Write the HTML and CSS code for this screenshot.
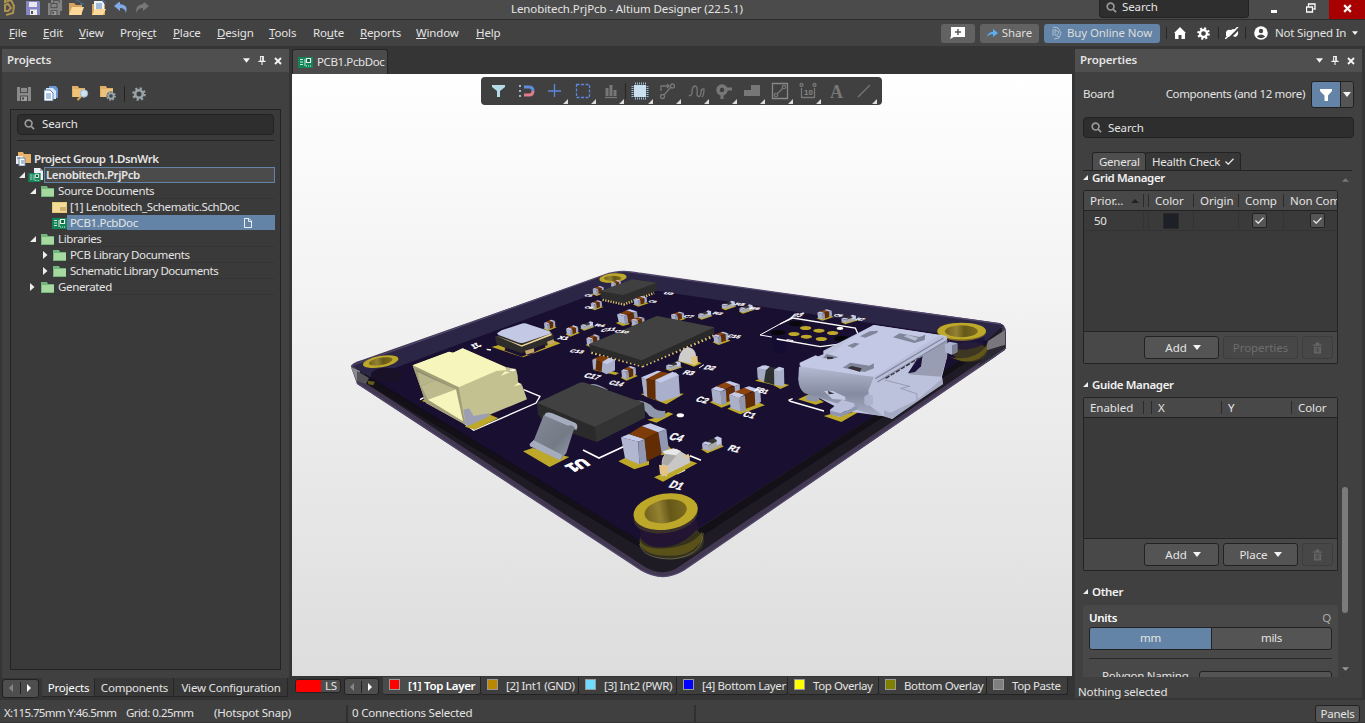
FILE: index.html
```
<!DOCTYPE html>
<html lang="en">
<head>
<meta charset="utf-8">
<title>Lenobitech.PrjPcb - Altium Designer (22.5.1)</title>
<link rel="stylesheet" href="styles.css">
</head>
<body>
<svg class="defs" width="0" height="0">
<defs>
<symbol id="mag" viewBox="0 0 12 12"><circle cx="5" cy="5" r="3.7" fill="none" stroke="#999" stroke-width="1.8"/><path d="M7.7 7.7 11 11" stroke="#999" stroke-width="2"/></symbol>
<symbol id="pin" viewBox="0 0 8 10"><path d="M2 .5h4M2.500 0v5.500M5.500 0v5.500M0 6h8M4 6v4M4.800 0v6" stroke="#f4f4f4" stroke-width="1.200" fill="none"/></symbol>
<symbol id="close" viewBox="0 0 8 8"><path d="M1 1l6 6M7 1 1 7" stroke="#f4f4f4" stroke-width="1.900"/></symbol>
<symbol id="down" viewBox="0 0 8 5"><path d="M0 0h8L4 5z" fill="#f4f4f4"/></symbol>
<symbol id="open" viewBox="0 0 6 6"><path d="M6 0v6H0z" fill="#eee"/></symbol>
<symbol id="shut" viewBox="0 0 5 8"><path d="M0 0l4.500 4L0 8z" fill="#eee"/></symbol>
<symbol id="floppy" viewBox="0 0 14 14"><path d="M0 0h13l1 1v13H0z" fill="currentColor"/><path d="M3 1h8v5H3z" fill="#e9e9ef"/><path d="M4 8.500h7V14H4z" fill="#eee"/><path d="M5 10h2v3H5z" fill="#555"/></symbol>
<symbol id="floppyg" viewBox="0 0 14 14"><path d="M0 0h14v14H0z" fill="#8a8a8a"/><path d="M3 0h8v6H3z" fill="#484848"/><path d="M4 1h6v4H4z" fill="#8a8a8a"/><path d="M3 8.500h8V14H3z" fill="#484848"/><path d="M4 9.500h6V14H4z" fill="#a0a0a0"/><path d="M5 10.500h2v2H5z" fill="#444"/></symbol>
<symbol id="gfold" viewBox="0 0 13 11"><path d="M0 0h6l1 2h6v9H0z" fill="#72b57e"/><path d="M1 3h12v7H1z" fill="#a5d9a0"/></symbol>
<symbol id="pcb" viewBox="0 0 15 11"><path d="M0 0h15v11H0z" fill="#128457"/><path d="M2 2.500h3M2 5h3M2 7.500h3M7 2v7" stroke="#cfe9da" stroke-width="1"/><path d="M8.500 1.500h4v4h-4zM8 9h1m1 0h1m1 0h1" stroke="#e3f3ea" fill="#0b5b3b" stroke-width="1.200"/></symbol>
<symbol id="gear" viewBox="0 0 14 14"><circle cx="7" cy="7" r="5.600" fill="none" stroke="currentColor" stroke-width="2.400" stroke-dasharray="2.200 2.198"/><circle cx="7" cy="7" r="3.800" fill="none" stroke="currentColor" stroke-width="2.600"/></symbol>
<symbol id="trash" viewBox="0 0 10 12"><path d="M0 2h10v1.500H0zM3 0h4v2H3zM1 4.500h8V12H1z" fill="#666"/><path d="M3.500 5.500v5M5 5.500v5M6.500 5.500v5" stroke="#444" stroke-width=".8"/></symbol>
<symbol id="check" viewBox="0 0 9 7"><path d="M.5 3.500 3.200 6.200 8.500.7" fill="none" stroke="#e6e6e6" stroke-width="1.300"/></symbol>
<symbol id="funnel" viewBox="0 0 12 12"><path d="M0 0h12v2L8 6.500V12H4.500V6.500L0 2z" fill="currentColor"/></symbol>
</defs>
</svg>
<div class="app">
<header class="title">
  <div class="quick">
    <svg width="160" height="19" viewBox="0 0 160 19"><path d="M5 0v2l6-2 3 6-1 7-7 2M5 5v6h3l3-3-3-4z" fill="none" stroke="#ad914f" stroke-width="2"/><use href="#floppy" x="26" y="1" width="14" height="14" color="#8587c4"/><g opacity=".9"><use href="#floppyg" x="51" y="0" width="11" height="11"/><use href="#floppyg" x="48" y="3" width="12" height="12"/></g><path d="M69 3h5l2 2h6v10H69z" fill="#d6a45f"/><path d="m72 7h12l-3 8H69z" fill="#ffd99a"/><path d="M76 1q5-1 6 4m-2-2 2 2 2-2" stroke="#48709b" fill="none"/><path d="M92 4h13v11H92z" fill="#d6a45f"/><path d="M94 1h8l2 2v8H94z" fill="#eef3fa"/><path d="M96 4h6m-6 2h6m-6 2h6" stroke="#5683b5"/><path d="M95 9h11l-3 6H92z" fill="#ffd99a"/><path d="M101 0q4 0 5 4" stroke="#48709b" fill="none"/><path d="M119 2l-5 4 6 5V8q5 0 6 5 3-8-6-9V2z" fill="#80a9e8"/><path d="M144 2l5 4-6 5V8q-5 0-7 5-1-8 7-9z" fill="#777"/></svg>
  </div>
  <h1>Lenobitech.PrjPcb - Altium Designer (22.5.1)</h1>
  <div class="tsearch"><svg width="11" height="11"><use href="#mag"/></svg><span>Search</span></div>
  <svg class="min" width="6" height="3"><path d="M0 0h6v3H0z" fill="#fff"/></svg>
  <svg class="max" width="10" height="10" viewBox="0 0 10 10"><path d="M2.500 3V1H9v5H7.500M.5 4h6v5h-6z" fill="none" stroke="#fff" stroke-width="1.300"/></svg>
  <div class="quit"><svg width="9" height="9" viewBox="0 0 8 8"><use href="#close"/></svg></div>
</header>
<nav class="menu">
  <span style="width:34px"><u>F</u>ile</span><span style="width:36px"><u>E</u>dit</span><span style="width:41px"><u>V</u>iew</span><span style="width:53px">Proje<u>c</u>t</span><span style="width:44px"><u>P</u>lace</span><span style="width:52px"><u>D</u>esign</span><span style="width:44px"><u>T</u>ools</span><span style="width:47px">Ro<u>u</u>te</span><span style="width:56px"><u>R</u>eports</span><span style="width:60px"><u>W</u>indow</span><span><u>H</u>elp</span>
  <div class="acts">
    <button class="b note"><svg width="16" height="12" viewBox="0 0 16 12"><path d="M1 0h14v10H4l-4 2 1-3z" fill="#fff"/><path d="M8 2v6M5 5h6" stroke="#555" stroke-width="1.400"/></svg></button>
    <button class="b share"><svg width="11" height="8" viewBox="0 0 11 8"><path d="M0 8q1-5 6-5V0l5 4-5 4V5Q2 5 0 8z" fill="#5cb0f5"/></svg>Share</button>
    <button class="b buy"><svg width="10" height="14" viewBox="0 0 10 14"><path d="M1 1l5 1 3 5-2 5-5 1M1 3v7m2-7v6l4 2M3 4l4 2-2 3" stroke="#a9bdcf" fill="none"/></svg>Buy Online Now</button>
    <i></i><svg width="12" height="12" viewBox="0 0 12 12"><path d="M6 0l6 6h-1v6H7.500V8h-3v4H1V6H0z" fill="#fff"/></svg>
    <svg class="g1" color="#fff" width="13" height="13"><use href="#gear"/></svg><i></i>
    <svg class="pl" width="14" height="12" viewBox="0 0 14 12"><path d="M1 5q1-3 5-2l2-1 3 1-7 7-3-1zM8 9l5-5q1 5-3 6z" fill="#fff"/><path d="M0 12 13 0" stroke="#fff" stroke-width="1.500"/></svg><i></i>
    <svg width="14" height="14" viewBox="0 0 14 14"><circle cx="7" cy="7" r="6.800" fill="#fff"/><circle cx="7" cy="5" r="2.200" fill="#444"/><path d="M2.800 10.500Q7 6.500 11.200 10.500 7 14 2.800 10.500z" fill="#444"/></svg>
    <span class="user">Not Signed In</span><svg width="6" height="4"><use href="#down"/></svg>
  </div>
</nav>
<main>
<section class="left">
  <div class="panel">
    <div class="phead"><b>Projects</b><svg width="7" height="5"><use href="#down"/></svg><svg width="8" height="9"><use href="#pin"/></svg><svg width="8" height="8"><use href="#close"/></svg></div>
    <div class="tools">
      <svg width="14" height="14"><use href="#floppyg"/></svg>
      <svg width="14" height="15" viewBox="0 0 14 15"><path d="M5 0h7l2 3v9H5z" fill="#6a98d6"/><path d="M2 2h7l3 3v8H2z" fill="#dae7f7"/><path d="M0 4h6l3 3v8H0z" fill="#fff" stroke="#5682bd"/><path d="M2 8h5M2 10h5M2 12h5" stroke="#5d8ac0"/></svg>
      <svg width="17" height="15" viewBox="0 0 17 15"><path d="M0 0h6l1 2h6v9H0z" fill="#e2ae65"/><path d="M1 3h12v8H1z" fill="#edc27a"/><circle cx="12" cy="7.500" r="3.700" fill="#cee2f0" stroke="#9bb8cd"/><path d="M9 10.500 5.500 14" stroke="#dba55c" stroke-width="2"/></svg>
      <svg color="#98a3aa" width="17" height="16" viewBox="0 0 17 16"><path d="M0 0h6l1 2h6v9H0z" fill="#e2ae65"/><path d="M1 3h12v8H1z" fill="#edc27a"/><circle cx="11" cy="10" r="4.500" fill="#444"/><use href="#gear" x="6" y="5" width="10" height="10"/></svg>
      <i></i><svg color="#98a3aa" width="14" height="14"><use href="#gear"/></svg>
    </div>
    <div class="box">
      <div class="search"><svg width="11" height="11"><use href="#mag"/></svg><span>Search</span></div>
      <hr>
      <div class="tree">
        <div class="row grp"><svg width="16" height="14" viewBox="0 0 16 14"><path d="M2 0h5l1 2h7v9H2z" fill="#e7b36b"/><path d="M0 4h7v8H0z" fill="#eee"/><path d="M3 6h6v8H3z" fill="#fff" stroke="#6889b0"/><path d="M1 6h3M5 9h3m-3 2h3" stroke="#5a7eaa"/></svg><b>Project Group 1.DsnWrk</b></div>
        <div class="row prj"><svg width="6" height="6"><use href="#open"/></svg><svg class="ic" width="16" height="14" viewBox="0 0 16 14"><path d="M6 0h6l3 3v9H6z" fill="#eef0f8"/><path d="M12 0v3h3" fill="#aab"/><use href="#pcb" y="5" width="13" height="9"/></svg><b>Lenobitech.PrjPcb</b></div>
        <div class="row l1"><svg width="6" height="6"><use href="#open"/></svg><svg class="ic" width="13" height="11"><use href="#gfold"/></svg><span>Source Documents</span></div>
        <div class="row leaf"><svg class="ic" width="15" height="11" viewBox="0 0 15 11"><path d="M0 0h15v11H0z" fill="#e9c778"/><path d="M1 1h13v9H1z" fill="#f5db98"/><path d="M8 6h6M8 8h6" stroke="#a88348"/></svg><span>[1] Lenobitech_Schematic.SchDoc</span></div>
        <div class="row leaf sel"><svg class="ic" width="15" height="11"><use href="#pcb"/></svg><span>PCB1.PcbDoc</span><svg class="pg" width="8" height="10" viewBox="0 0 8 10"><path d="M.5.5h4.500L7.500 3v6.500h-7zM4.500.5V3.500H7.500" stroke="#e8eef4" fill="none"/></svg></div>
        <div class="row l1"><svg width="6" height="6"><use href="#open"/></svg><svg class="ic" width="13" height="11"><use href="#gfold"/></svg><span>Libraries</span></div>
        <div class="row l2"><svg width="5" height="8"><use href="#shut"/></svg><svg class="ic" width="13" height="11"><use href="#gfold"/></svg><span>PCB Library Documents</span></div>
        <div class="row l2"><svg width="5" height="8"><use href="#shut"/></svg><svg class="ic" width="13" height="11"><use href="#gfold"/></svg><span class="sl">Schematic Library Documents</span></div>
        <div class="row l1"><svg width="5" height="8"><use href="#shut"/></svg><svg class="ic s" width="13" height="11"><use href="#gfold"/></svg><span>Generated</span></div>
      </div>
    </div>
  </div>
  <div class="ltabs"><div class="arrows"><svg width="35" height="17" viewBox="0 0 35 17"><path d="M10 4v8L6 8z" fill="#858585"/><path d="M17.500 2v12" stroke="#222"/><path d="M24 4v8l4-4z" fill="#fff"/></svg></div><span class="on" style="width:53px">Projects</span><span style="width:79px">Components</span><span style="width:114px">View Configuration</span></div>
</section>
<section class="mid">
  <div class="doctabs"><div class="doc"><svg width="15" height="11"><use href="#pcb"/></svg><span>PCB1.PcbDoc</span></div></div>
  <div class="canvas">
  <svg class="board" width="780" height="602" viewBox="292 74 780 602">
    <defs>
      <linearGradient id="hole"><stop offset="0" stop-color="#72641c"/><stop offset=".35" stop-color="#948133"/><stop offset=".6" stop-color="#655817"/><stop offset="1" stop-color="#7c6c20"/></linearGradient>
      <linearGradient id="usb" x2="0" y2="1"><stop offset="0" stop-color="#b4bad2"/><stop offset=".55" stop-color="#858ba0"/><stop offset="1" stop-color="#a8aec6"/></linearGradient>
      <linearGradient id="leg" x2="1" y2="1"><stop offset="0" stop-color="#858b98"/><stop offset=".6" stop-color="#747b87"/><stop offset="1" stop-color="#9ba1b2"/></linearGradient>
      <g id="cap"><path d="M-8 114 12 104 56 120 84 112 84 124 40 138zM118 96 140 66 164 90z" fill="#bda82a"/><path d="M0 42 52 55 55 123 12 105z" fill="#b1b7d0"/><path d="M52 55 72 48 78 115 55 123z" fill="#9298b1"/><path d="M0 42 24 32 72 47 52 55z" fill="#c5cae8"/><path d="M24 32 62 8 112 26 70 48z" fill="#7d3c08"/><path d="M70 48 112 26 122 92 78 114z" fill="#622d05"/><path d="M62 8 88 0 136 18 112 27z" fill="#c5cae8"/><path d="M112 27 136 18 143 75 122 92z" fill="#9298b1"/></g>
      <g id="chip"><path d="M-2 32 14 40 45 27 23 16z" fill="#bda82a"/><path d="M0 12 13 16 14 36 2 31z" fill="#aab0c9"/><path d="M13 16 20 13 21 34 14 36z" fill="#9298b1"/><path d="M0 12 7 8 20 12 13 16z" fill="#c5cae8"/><path d="M7 8 19 2 31 6 20 12z" fill="#8e440d"/><path d="M20 12 32 7 33 27 21 32z" fill="#622d05"/><path d="M19 2 25 0 39 5 32 8z" fill="#c5cae8"/><path d="M32 8 39 5 40 22 33 27z" fill="#a3a9c2"/></g>
      <g id="res"><path d="M-2 31 12 40 49 25 37 18z" fill="#bda82a"/><path d="M0 18 15 22 16 35 1 30z" fill="#aab0c9"/><path d="M0 18 27 6 43 9 15 22z" fill="#333"/><path d="M15 22 43 9 45 23 16 35z" fill="#aaa"/><path d="M27 6 34 2 44 6 43 18 33 22 33 11z" fill="#c5cae8"/><path d="M0 18 7 14 22 17 15 22z" fill="#c5cae8"/></g>
    </defs>
    <path d="M351 367Q351 363 362 360L604 275Q620 269 638 273L999 323Q1006 325 1006 332V348L995 357 684 570Q663 583 641 570L357 384z" fill="#423852"/>
    <path d="M357 364 608 276Q620 272 636 276L1002 328V347L680 566Q664 578 645 567L358 378z" fill="#1e1b24"/>
    <path d="M352 365 606 275Q621 270 640 274L1004 325 985 342 665 550 642 544 366 376z" fill="#2b2546"/>
    <path d="M368 378 610 288 625 286 990 341 981 347 678 541Q663 552 644 544z" fill="#190f31"/>
    <path d="M365 374 642 542Q662 552 680 541L984 345 988 348 681 550Q664 561 644 550L360 380z" fill="#100e14" opacity=".8"/>
    <path d="M988 341 1005 330V345L985 351z" fill="#79777b"/><path d="M985 351 1005 345V350L978 368z" fill="#2a2830"/><path d="M351 367 360 371 357 382z" fill="#8a898e"/><path d="M357 371 369 378 366 384 357 381z" fill="#555258"/>
    <path d="M357 383 641 570Q663 583 684 570L1006 348M351 366 604 275Q620 269 638 273L1001 324" stroke="#51466a" stroke-width="1.300" fill="none"/>
    <g transform="translate(345 260) scale(.33333)">
      <ellipse cx="125" cy="345" rx="47" ry="22" fill="#191127"/><ellipse cx="107" cy="305" rx="54" ry="17" transform="rotate(-10 107 305)" fill="#bda82a"/><ellipse cx="107" cy="304" rx="36" ry="11" transform="rotate(-10 107 304)" fill="url(#hole)"/><path d="M68 362 90 365 85 376 70 373z" fill="#65591d"/>
      <path d="M225 419 236 413M536 389 585 409 573 429 386 511 360 492M425 268 438 270" fill="none" stroke="#fff" stroke-width="4"/>
      <path d="M231 424 255 430 238 417zM360 500 390 509 460 475 415 455z" fill="#bda82a"/>
      <path d="M203 316 312 275 324 278 353 265 481 321 513 327 518 347 519 366 532 377 546 418 361 494 243 429z" fill="#c4c190"/>
      <path d="M203 316 312 275 324 278 353 265 481 321 484 330 454 333 341 382z" fill="#f6f5bb"/>
      <path d="M203 316 341 382 361 493 243 429z" fill="#a19e79"/>
      <path d="M213 328 330 386 334 390 272 363 228 378z" fill="#8f8c6b"/><path d="M217 335 271 361 226 378z" fill="#b8b58a"/><path d="M228 378 271 361 333 388 250 420z" fill="#bdba8d"/><path d="M249 419 333 388 354 484z" fill="#f6f5bb"/><path d="M467 348 495 337 480 334zM506 379 532 373 520 368z" fill="#f6f5bb"/>
      <path d="M355 449 372 445 386 468 434 459 429 471 369 498 361 493z" fill="#9c9fb4"/>
      <path d="M440 261 461 255 553 286 627 242 647 250 623 259 534 292z" fill="#bda82a"/><path d="M450 230 540 190 626 223 626 248 529 285 455 253z" fill="#2e2d2b"/><path d="M480 267 530 285 600 258" stroke="#1a1030" stroke-width="10" fill="none"/><path d="M453 227 530 256 620 220 620 226 530 260z" fill="#ecd594"/><path d="M456 220 470 211 527 192Q538 187 550 193L614 214Q622 219 612 223L543 246Q530 252 518 247L461 225z" fill="#c3c8e5"/><path d="M540 272 567 265 568 277 543 284zM606 245 626 238 628 249 609 256z" fill="#c6a66c"/>
      <use href="#chip" transform="translate(597 179) scale(.85)"/><use href="#chip" transform="translate(664 196) scale(.85)"/>
    </g>
    <g transform="translate(560 260) scale(.33333)">
      <ellipse cx="159" cy="54" rx="41" ry="14" transform="rotate(-6 159 54)" fill="#bda82a"/><ellipse cx="158" cy="55" rx="26" ry="8" fill="url(#hole)"/>
      <use href="#chip" transform="translate(98 78) scale(.85 .75)"/><use href="#chip" transform="translate(153 60) scale(.75)"/>
      <path d="M128 118 192 132 282 98" stroke="#d3bf61" stroke-width="10" stroke-dasharray="4 4" fill="none"/><path d="M121 92 229 58 290 68 290 92 190 130 122 115z" fill="#2d2d2d"/><path d="M121 94 216 58 290 68 190 105z" fill="#404040"/>
      <use href="#chip" transform="translate(92 121) scale(.85 .75)"/><use href="#chip" transform="translate(221 108) scale(1 .8)"/><use href="#cap" transform="translate(171 148) scale(.44 .36)"/><use href="#chip" transform="translate(214 170) scale(1 .8)"/><use href="#chip" transform="translate(333 155) scale(1 .8)"/>
      <use href="#res" transform="translate(414 149) scale(.9 .75)"/><use href="#res" transform="translate(485 121) scale(.9 .75)"/><use href="#res" transform="translate(538 131) scale(.9 .75)"/><use href="#res" transform="translate(62 182) scale(.85 .75)"/><use href="#chip" transform="translate(19 197) scale(.9 .8)"/><use href="#chip" transform="translate(79 223)"/>
      <path d="M95 274 247 314 460 224" fill="none" stroke="#d3bf61" stroke-width="16" stroke-dasharray="5 7"/>
      <path d="M87 253 291 168 463 202 463 222 247 318 91 274z" fill="#2a2a2a"/><path d="M87 253 291 168 463 202 245 301z" fill="#414141"/>
      <g transform="translate(97 285)"><path d="M0 44 70 60 80 54 20 38z" fill="#bda82a"/><path d="M2 14 36 24 34 52 6 44z" fill="#622d05"/><path d="M0 13 26 2 56 10 36 24z" fill="#7d3c08"/><path d="M0 14 12 10 10 44 2 41z" fill="#a8aec6"/><path d="M30 24 68 14 68 46 42 58 28 50z" fill="#aab0cc"/><path d="M28 22 50 8 68 14 44 28z" fill="#c5cae8"/></g><use href="#chip" transform="translate(184 318) scale(1.100)"/><use href="#chip" transform="translate(460 215) scale(1.150 1)"/><use href="#res" transform="translate(318 302) scale(1 .8)"/>
      <path d="M352 302 402 320 425 310 408 303z" fill="#bda82a"/><path d="M355 303Q359 264 387 262 407 267 408 288L407 315z" fill="#cfcdca"/><path d="M392 292 412 287 414 309 398 317z" fill="#dfc57c"/><path d="M417 324 432 314" stroke="#fff" stroke-width="3"/>
      <g transform="translate(244 332)"><path d="M-2 70 36 63 128 69 75 101z" fill="#bda82a"/><path d="M2 25 49 41 41 88 8 75z" fill="#a0a5ba"/><path d="M12 24 52 2 98 10 57 34z" fill="#7d3c08"/><path d="M15 24 55 35 48 90 17 80z" fill="#622d05"/><path d="M0 20 14 25 18 80 8 72z" fill="#a8aec6"/><path d="M0 20 48 0 60 2 14 26z" fill="#c5cae8"/><path d="M42 28 103 5 112 14 116 76 60 93 43 86z" fill="#aab0cc"/><path d="M42 28 94 3 112 12 57 36z" fill="#c5cae8"/></g>
      <use href="#chip" transform="translate(454 363) scale(2.180 2)"/><use href="#chip" transform="translate(507 379) scale(2.400 2.100)"/>
      <g transform="translate(591 315)"><path d="M-6 47 12 40 97 60 70 72 48 60z" fill="#bda82a"/><path d="M0 9 27 1 53 14 53 52 20 51 2 40z" fill="#a4aac2"/><path d="M28 6 61 8 53 60 21 51z" fill="#2e2f2f"/><path d="M51 15 81 10 82 64 52 60z" fill="#a8aec8"/><path d="M0 9 18 1 38 4 29 14zM51 14 66 5 82 10 67 19z" fill="#c5cae8"/></g>
      <path d="M700 170 600 225 700 242" fill="none" stroke="#fff" stroke-width="3"/><ellipse cx="654" cy="218" rx="22" ry="8" fill="#07070a"/><path d="M635 225 680 232V275Q660 290 640 273z" fill="#150c32"/>
      <ellipse cx="361" cy="466" rx="11" ry="6" fill="#fff"/>
    </g>
    <g transform="translate(780 280) scale(.33333)">
      <path d="M0 132 39 114 226 144 239 174M-10 177 121 200 195 190M25 361 38 356M28 363 132 393" fill="none" stroke="#fff" stroke-width="4"/>
      <ellipse cx="48" cy="131" rx="21" ry="8" fill="#09080b"/><ellipse cx="185" cy="176" rx="23" ry="9" fill="#07070a"/>
      <g fill="#bda82a"><ellipse cx="77" cy="144" rx="17" ry="6"/><ellipse cx="117" cy="152" rx="17" ry="6"/><ellipse cx="158" cy="159" rx="17" ry="6"/><ellipse cx="42" cy="162" rx="17" ry="6"/><ellipse cx="79" cy="170" rx="17" ry="6"/><ellipse cx="124" cy="177" rx="17" ry="6"/></g><ellipse cx="180" cy="145" rx="10" ry="5" fill="#fff"/>
      <use href="#chip" transform="translate(112 88) scale(1.100 .85)"/><use href="#res" transform="translate(184 103) scale(1 .75)"/>
      <ellipse cx="569" cy="215" rx="52" ry="30" fill="#3d3722"/><path d="M510 232Q585 245 621 195V212Q600 248 545 244z" fill="#625719"/><path d="M474 160Q520 191 615 170L608 195Q530 228 490 185z" fill="#1e1540" opacity=".8"/>
      <ellipse cx="545" cy="156" rx="73" ry="27" fill="#7e6b20"/><ellipse cx="545" cy="153" rx="73" ry="25" fill="#bda82a"/><ellipse cx="544" cy="154" rx="49" ry="18" fill="url(#hole)"/>
      <path d="M54 358 90 341 132 366 107 374zM131 408 165 398 200 402 235 390 236 396 184 426z" fill="#bda82a"/><path d="M78 348 100 342 119 353 112 365 80 361z" fill="#8e94aa"/>
      <path d="M397 223 500 181 501 231 486 290 489 312 397 370 337 417 311 409 190 392 68 328 56 300 59 262 77 244 130 223 130 212 281 135 500 168z" fill="#bcc1dc"/>
      <path d="M412 226 502 181 502 227 483 290 386 283z" fill="#989db4"/><path d="M384 280 412 237 428 225 423 259 405 276z" fill="#1c113b"/>
      <path d="M59 248 107 226 130 238 213 173 226 167 281 135 499 168 501 183 299 307 280 297 59 257z" fill="#c3c8e4"/>
      <path d="M57 260 85 263 260 288 282 290 265 331 270 377 311 409 272 402 74 340Q56 327 55 298z" fill="url(#usb)"/>
      <path d="M129 234 140 222 175 231 160 237zM202 197 224 188 239 191 219 204zM240 169 269 154 293 152 292 158 256 173zM339 172 359 160 419 171 436 164 434 180 403 189zM188 263 211 248 268 257 281 250 282 265 253 276z" fill="#80869a"/>
      <path d="M140 230 160 231 157 237 142 238zM203 264 215 258 245 265 240 276z" fill="#343139"/><path d="M371 169 383 164 415 174 405 182z" fill="#b8bdd7"/>
      <path d="M280 292 475 167 500 169 500 182 322 293 294 309z" fill="#bac0db"/><path d="M292 306 502 181M286 296 490 174" stroke="#83889d" stroke-width="4"/>
      <path d="M317 295 416 235" stroke="#322f3d" stroke-width="4" stroke-dasharray="13 5"/><path d="M313 300 389 319 362 325 410 341 412 364" fill="none" stroke="#858ba1" stroke-width="2"/>
      <path d="M313 407 312 391 331 398 411 360 487 296 488 313 337 416z" fill="#a5abc3"/>
      <path d="M253 350 264 342 279 347 279 374 262 378 253 371zM494 194 508 185 532 190 532 216 515 224 496 217z" fill="#adb3ce"/><path d="M516 196 532 190 532 216 516 223z" fill="#7b8195"/>
      <path d="M132 333 157 332 195 350 197 360 157 357z" fill="#c2c7e2"/><path d="M144 332 163 341 146 343z" fill="#38353a"/><path d="M150 389 186 359 222 370 224 379 180 402 179 411 152 403z" fill="#b9bfda"/><path d="M151 392 183 400 231 378 232 388 184 411 152 404z" fill="#9096ad"/>
    </g>
    <g transform="translate(510 370) scale(.33333)">
      <path d="M412 149 443 142 475 126 490 132 439 158z" fill="#bda82a"/><path d="M372 91Q415 92 432 115 445 125 466 122L465 140Q440 150 418 138 405 118 380 105z" fill="#8f98a8"/><path d="M242 46Q260 42 292 62M302 67 345 84" fill="none" stroke="#8992a1" stroke-width="6"/>
      <path d="M81 98 209 38 256 47 402 99 405 143 260 216 107 163 84 133z" fill="#2a2a2a"/><path d="M81 98 209 38Q217 35 230 40L402 99 255 171z" fill="#414141"/><path d="M255 171 402 99 405 143 260 216z" fill="#333"/>
      <path d="M39 244 68 234 178 261 119 291z" fill="#bda82a"/><path d="M73 207 101 136Q108 128 120 128L190 158Q204 162 202 174L191 180 169 249 150 271 59 226z" fill="url(#leg)"/><path d="M105 131Q113 124 127 130L195 158Q207 165 198 182 190 162 174 167L105 137zM59 221 71 211 157 255 150 271 60 229z" fill="#a4acbd"/>
      <path d="M219 240 267 264 340 230M540 257 573 271M500 311 525 300" fill="none" stroke="#fff" stroke-width="5"/>
      <use href="#cap" transform="translate(333 160)"/>
      <path d="M432 322 452 313 541 272 562 280 459 335z" fill="#bda82a"/><path d="M455 289Q453 259 473 243L499 236 539 260 540 278 455 320z" fill="#c8c7c6"/><path d="M458 244 490 235 513 243 498 255 464 252z" fill="#e8e8e8"/><path d="M464 251 499 257 473 287 456 282z" fill="#aaa9a8"/><path d="M447 284 476 289 471 320 450 311zM525 257 535 251 540 262 530 265z" fill="#e4c486"/>
      <use href="#res" transform="translate(576 196) scale(1.340)"/>
      <ellipse cx="485" cy="514" rx="97" ry="54" fill="#34321f"/><path d="M390 510Q400 540 470 535 550 527 576 485L578 506Q546 559 480 557 406 559 390 522z" fill="#5a5119"/><path d="M390 472 392 505Q410 532 450 532 517 533 566 471L557 445z" fill="#221432"/>
      <ellipse cx="467" cy="437" rx="97" ry="52" transform="rotate(-9 467 437)" fill="#3a302c"/><ellipse cx="467" cy="425" rx="97" ry="54" transform="rotate(-8 467 425)" fill="#bda82a"/><ellipse cx="467" cy="424" rx="64" ry="35" transform="rotate(-10 467 424)" fill="url(#hole)"/>
      <path d="M389 522Q400 567 485 567 575 559 580 489" fill="none" stroke="#79785d" stroke-width="2"/>
    </g>
    <g class="silk">
      <text transform="matrix(.8 .2 -.6 .8 668 439)">C4</text><text transform="matrix(.8 .2 -.6 .8 668 487)">D1</text><text transform="matrix(.85 .2 -.6 .75 727 450)" font-size="10">R1</text>
      <text transform="matrix(.85 .2 -.6 .7 695 401)" font-size="10">C2</text><text transform="matrix(.85 .2 -.6 .7 742 416)" font-size="10">C1</text><text transform="matrix(.8 .2 -.6 .7 754 391)" font-size="8">FB1</text>
      <text transform="matrix(.8 .15 -.6 .6 583 377)" font-size="10">C17</text><text transform="matrix(.8 .15 -.6 .6 608 384)" font-size="9">C14</text><text transform="matrix(.9 .1 -.6 .6 682 374)" font-size="9">R3</text><text transform="matrix(.9 .1 -.6 .6 703 369)" font-size="9">D2</text>
      <text transform="matrix(.9 -.1 -.4 .5 600 332)" font-size="9">C11</text><text transform="matrix(.9 .1 -.5 .5 569 352)" font-size="8">C13</text><text transform="matrix(.9 .1 -.5 .4 614 332)" font-size="8">C10</text><text transform="matrix(.8 .1 -.5 .5 727 337)" font-size="8">C15</text>
      <text transform="matrix(.9 .1 -.5 .4 683 317)" font-size="8">C7</text><text transform="matrix(.9 .1 -.5 .4 712 314)" font-size="8">R2</text><text transform="matrix(.9 .1 -.5 .4 734 305)" font-size="8">R5</text><text transform="matrix(.9 .1 -.5 .4 749 309)" font-size="8">R6</text><text transform="matrix(1 .1 -.5 .4 663 294)" font-size="7">U3</text><text transform="matrix(.8 .1 -.5 .4 584 296)" font-size="7">C5</text><text transform="matrix(.8 .1 -.5 .4 584 308)" font-size="7">C6</text><text transform="matrix(.8 .1 -.5 .4 648 302)" font-size="7">C9</text>
      <text transform="matrix(.9 .1 -.5 .5 557 339)" font-size="9">X1</text><text transform="matrix(.9 .1 -.5 .4 594 326)" font-size="8">R4</text><text transform="matrix(-.8 .3 .7 .6 482 346)" font-size="9">J1</text><text transform="matrix(1 .1 -.5 .4 508 371)" font-size="10">●</text>
      <text transform="matrix(.9 -.1 -.6 .6 790 318)" font-size="10">P3</text><text transform="matrix(.8 .1 -.5 .4 833 316)" font-size="8">C6</text><text transform="matrix(.8 .1 -.5 .4 855 320)" font-size="8">R7</text>
      <text class="u1" transform="matrix(-.9 .4 -.7 -.6 583 458)" font-size="16">U1</text>
    </g>
  </svg>
  <div class="pill">
  <svg width="401" height="28" viewBox="481 77 401 28" fill="none" stroke="#777" stroke-width="1.300">
    <path d="M492 85h13v2l-5 4v6h-3v-6l-5-4z" fill="#b4dbe8" stroke="none"/><path d="M524 87h5q4 0 4 4" stroke="#5f8dd8" stroke-width="3"/><path d="M524 95h5q4 0 4-4" stroke="#e07d88" stroke-width="3"/><path d="M520 85v12" stroke="#96b9c9" stroke-width="2" stroke-dasharray="2 3"/>
    <path d="M548 91h13M554.500 84v13" stroke="#5d87df"/><path d="M576.500 84.500h13v13h-13z" stroke="#5d87df" stroke-dasharray="3 1.500"/><path d="M607 96V88m4 8v-11m4 11v-6" stroke="#777" stroke-width="3"/><path d="M605 97.500h12"/><path d="M625.500 83v16" stroke="#2b2b2b"/>
    <path d="M634 85h12v12h-12z" fill="#cbe0ee" stroke="none"/><path d="M635 83.500h11M635 98.500h11" stroke="#9dbfd7" stroke-width="2" stroke-dasharray="1 1"/><path d="M632.500 86v11M647.500 86v11" stroke="#9dbfd7" stroke-width="2" stroke-dasharray="1 1"/>
    <path d="M661 91v-5h8m-2-2 2 2-2 2M664 95l7-8"/><circle cx="662.500" cy="96.500" r="2"/><circle cx="672.500" cy="86" r="2"/><path d="M689 95q2 2 3-2 0-7 3-7t2 9q3 4 4-2 0-5 3-4 0 6-2 8"/>
    <circle cx="722" cy="90" r="4" stroke-width="3.500"/><path d="M727 89h5M722 94v5" stroke-width="3"/><path d="M744 90h7v-5h9v11h-16z" fill="#777" stroke="none"/><path d="M772.500 83.500h15v15h-15z" stroke="#888"/><path d="M777 94l6-6"/><circle cx="776" cy="95" r="1.700"/><circle cx="784" cy="87" r="1.700"/>
    <path d="M801.500 88v9.500h13V88"/><circle cx="801.500" cy="85" r="1.500"/><circle cx="814.500" cy="85" r="1.500"/><text x="804" y="95" font-size="8" font-weight="bold" fill="#888" stroke="none" font-family="Liberation Sans">10</text><text x="830" y="97.500" font-size="18" font-weight="bold" fill="#777" stroke="none" font-family="Liberation Serif">A</text><path d="M858 97l12-12"/>
    <path d="M568 99v5h-5zM596 99v5h-5zM624 99v5h-5zM653 99v5h-5zM681 99v5h-5zM709 99v5h-5zM737 99v5h-5zM765 99v5h-5zM793 99v5h-5zM821 99v5h-5zM877 99v5h-5z" fill="#ddd" stroke="none"/>
  </svg></div>
  </div>
  <div class="layers"><div class="ls"><i></i><span>LS</span></div><div class="arrows"><svg width="33" height="16" viewBox="0 0 33 16"><path d="M9 4v8L5 8z" fill="#858585"/><path d="M16.500 2v12" stroke="#222"/><path d="M23 4v8l4-4z" fill="#fff"/></svg></div>
  <div class="ly on" style="width:98px"><i style="background:#f00"></i>[1] Top Layer</div><div class="ly" style="width:98px"><i style="background:#b98700"></i>[2] Int1 (GND)</div><div class="ly" style="width:98px"><i style="background:#6fdcff"></i>[3] Int2 (PWR)</div><div class="ly" style="width:111px"><i style="background:#00f"></i>[4] Bottom Layer</div><div class="ly" style="width:91px"><i style="background:#ff0"></i>Top Overlay</div><div class="ly" style="width:108px"><i style="background:#808000"></i>Bottom Overlay</div><div class="ly" style="width:81px"><i style="background:#808080"></i>Top Paste</div></div>
</section>
<section class="right">
  <div class="phead"><b>Properties</b><svg width="7" height="5"><use href="#down"/></svg><svg width="8" height="9"><use href="#pin"/></svg><svg width="8" height="8"><use href="#close"/></svg></div>
  <div class="filter"><span>Board</span><span class="cmp">Components (and 12 more)</span><div class="fb"><div><svg color="#fff" width="12" height="12"><use href="#funnel"/></svg></div><em><svg width="8" height="5"><use href="#down"/></svg></em></div></div>
  <div class="search"><svg width="11" height="11"><use href="#mag"/></svg><span>Search</span></div>
  <div class="ptabs"><span class="on">General</span><span>Health Check <svg width="9" height="7"><use href="#check"/></svg></span></div>
  <div class="scroll">
   <div class="content">
    <h2 class="gm"><svg width="5" height="5"><use href="#open" width="5" height="5"/></svg>Grid Manager</h2>
    <div class="table">
      <div class="th"><span style="width:60px">Prior...<svg width="8" height="4" viewBox="0 0 8 4"><path d="M0 4 4 0 8 4z" fill="#222"/></svg></span><span style="width:5px"></span><span style="width:45px">Color</span><span style="width:45px">Origin</span><span style="width:45px">Comp</span><span class="nc">Non Com</span></div>
      <div class="td"><span style="width:60px">50</span><span style="width:5px"></span><span style="width:45px"><i class="sw"></i></span><span style="width:45px"></span><span class="c1" style="width:45px"><i class="cb"><svg width="9" height="7"><use href="#check"/></svg></i></span><span class="last"><i class="cb"><svg width="9" height="7"><use href="#check"/></svg></i></span></div>
    </div>
    <div class="foot"><button>Add<svg width="8" height="5"><use href="#down"/></svg></button><button class="dis">Properties</button><button class="dis tr"><svg width="9" height="12"><use href="#trash"/></svg></button></div>
    <h2 class="gd"><svg width="5" height="5"><use href="#open" width="5" height="5"/></svg>Guide Manager</h2>
    <div class="table"><div class="th"><span style="width:60px">Enabled</span><span style="width:8px"></span><span style="width:70px">X</span><span style="width:70px">Y</span><span class="nc">Color</span></div></div>
    <div class="foot"><button>Add<svg width="8" height="5"><use href="#down"/></svg></button><button>Place<svg width="8" height="5"><use href="#down"/></svg></button><button class="dis tr"><svg width="9" height="12"><use href="#trash"/></svg></button></div>
    <h2 class="ot"><svg width="5" height="5"><use href="#open" width="5" height="5"/></svg>Other</h2>
    <div class="units"><div class="uh"><b>Units</b><span>Q</span></div><div class="seg"><span class="on">mm</span><span>mils</span></div><hr><div class="poly"><span>Polygon Naming</span><div></div></div></div>
   </div>
   <div class="bar"><svg width="7" height="4" viewBox="0 0 8 4"><path d="M0 4 4 0 8 4z" fill="#777"/></svg><i></i><svg width="7" height="4" viewBox="0 0 8 4"><path d="M0 0h8L4 4z" fill="#999"/></svg></div>
  </div>
  <div class="nothing">Nothing selected</div>
</section>
</main>
<footer><span class="xy" style="width:122px">X:115.75mm Y:46.5mm</span><span class="gr" style="width:88px">Grid: 0.25mm</span><span style="width:132px">(Hotspot Snap)</span><i></i><span class="con">0 Connections Selected</span><i></i><button>Panels</button></footer>
</div>
</body>
</html>
```
FILE: styles.css
```
* { box-sizing: border-box; }
body { margin: 0; background: #353535; overflow: hidden; }
.defs { position: absolute; }
.app { width: 1365px; height: 723px; display: flex; flex-direction: column; background: #353535; color: #e4e4e4; font: 11.5px/16px "Noto Sans", "Open Sans", sans-serif; letter-spacing: -.3px; white-space: nowrap; }
svg { display: block; flex: none; }
button { font: inherit; color: inherit; letter-spacing: inherit; border: 0; padding: 0; display: flex; align-items: center; justify-content: center; }
hr { border: 0; margin: 0; }
b, h2 { font-weight: 600; }
.title { height: 20px; flex: none; background: #4b4b4b; border-bottom: 1px solid #2c2c2c; display: flex; }
.quick { width: 511px; flex: none; }
h1 { margin: 0; width: 588px; flex: none; font-size: 11.5px; font-weight: 400; letter-spacing: -.1px; line-height: 18px; }
.tsearch { width: 150px; flex: none; height: 18px; background: #2e2e2e; border: 1px solid #222; border-top: 0; border-radius: 0 0 4px 4px; display: flex; padding: 2px 0 0 6px; letter-spacing: -.1px; }
.tsearch span { margin: -3px 0 0 5px; }
.min { margin: 10px 0 0 22px; }
.max { margin: 3px 0 0 29px; }
.quit { margin-left: 13px; width: 36px; height: 19px; background: #a80000; display: flex; align-items: center; justify-content: center; padding-bottom: 3px; }
.menu { height: 26px; flex: none; background: #424242; display: flex; align-items: center; padding-left: 9px; letter-spacing: -.15px; }
.menu > span { flex: none; }
.menu u { text-underline-offset: 1px; }
.acts { margin-left: auto; display: flex; align-items: center; padding-right: 7px; height: 26px; }
.acts .b { height: 19px; border-radius: 3px; background: #626262; margin-right: 5px; color: #ddd; letter-spacing: -.1px; }
.acts .note { width: 34px; }
.acts .share { width: 59px; gap: 4px; }
.acts .buy { width: 116px; background: #6384a6; gap: 5px; margin-right: 6px; }
.acts i { width: 1px; height: 12px; background: #262626; margin-right: 7px; }
.acts .g1 { margin: 0 8px 0 11px; }
.acts .g1 + i { margin-right: 6px; }
.acts .pl { margin-right: 6px; }
.acts .pl + i { margin-right: 8px; }
.acts .user { margin: 0 4px 0 7px; width: 73px; letter-spacing: -.2px; }
main { height: 654px; flex: none; display: flex; }
.left { width: 292px; padding: 3px 3px 0 2px; flex: none; }
.panel { height: 629px; background: #404040; display: flex; flex-direction: column; }
.phead { height: 23px; flex: none; background: #4f4f4f; display: flex; align-items: center; padding: 0 7px 0 5px; gap: 8px; }
.phead b { margin: -1px auto 0 0; letter-spacing: -.1px; }
.tools { height: 37px; display: flex; align-items: center; padding: 6px 0 0 15px; gap: 13px; }
.tools svg:nth-child(3) { margin-left: 1px; }
.tools svg:nth-child(4) { margin-left: -2px; }
.tools i { width: 1px; height: 16px; background: #222; margin: 0 -6px 0 -6px; }
.box { margin: 0 8px 0; height: 561px; border: 1px solid #232323; background: #3a3a3a; padding: 4px 6px; }
.search { height: 21px; background: #2e2e2e; border: 1px solid #222; border-radius: 4px; display: flex; align-items: center; padding-left: 7px; letter-spacing: -.1px; }
.search span { margin-left: 6px; }
.box .search { width: 257px; padding-left: 6px; }
.box .search span { margin-top: -1px; margin-left: 7px; }
.box hr { height: 1px; background: #232323; margin: 5px 0 10px; width: 257px; }
.tree { width: 258px; }
.row { height: 16px; display: flex; align-items: center; letter-spacing: -.36px; }
.row b, .row span { flex: 1; height: 16px; line-height: 15px; border-bottom: 1px solid #353535; padding-left: 2px; }
.row b { letter-spacing: -.42px; }
.row.grp { margin-left: -1px; }
.row.grp b, .leaf span { border-bottom-color: #3a3a3a; }
.row.grp + .row { padding-left: 2px; }
.row.prj .ic { margin-left: 3px; }
.row.prj b { border: 1px solid #6384a6; background: #4b4b4b; line-height: 13px; padding-left: 1px; }
.row.l1 { padding-left: 13px; }
.row .ic { margin-left: 5px; }
.row .ic.s { margin-left: 6px; }
.row.l2 { padding-left: 26px; }
.row.leaf { padding-left: 30px; }
.row.l1 span, .row.l2 span { padding-left: 4px; }
.row .sl { letter-spacing: -.47px; }
.row.leaf span { padding-left: 3px; }
.row.sel span { background: #6384a6; line-height: 16px; }
.pg { margin-left: -31px; margin-right: 23px; }
.ltabs { height: 19px; display: flex; align-items: flex-start; }
.arrows { border: 1px solid #222; border-radius: 3px; background: #4e4e4e; margin: 1px 3px 0 0; flex: none; }
.ltabs span { height: 19px; line-height: 20px; padding-left: 1px; text-align: center; background: #373737; border: 1px solid #262626; border-left: 0; border-top: 0; letter-spacing: -.2px; flex: none; }
.ltabs .on { background: #404040; color: #fff; }
.mid { width: 780px; flex: none; }
.doctabs { height: 28px; padding-top: 3px; }
.doc { width: 96px; height: 25px; background: #4b4b4b; border: 1px solid #262626; border-bottom: 0; border-radius: 3px 3px 0 0; display: flex; align-items: center; padding-left: 5px; gap: 4px; letter-spacing: -.4px; }
.doc span { margin-top: -1px; }
.canvas { height: 602px; background: linear-gradient(#fff, #ddd); position: relative; }
.silk { fill: #fff; stroke: #fff; stroke-width: .4; font-family: "Liberation Sans", sans-serif; font-size: 12px; font-weight: 700; letter-spacing: 0; }
.silk .u1 { stroke-width: 1.2; }
.pill { position: absolute; left: 189px; top: 3px; background: #404040; border-radius: 4px; letter-spacing: 0; }
.layers { height: 22px; display: flex; padding: 1px 0 0 3px; overflow: hidden; }
.ls { display: flex; width: 46px; flex: none; height: 14px; margin: 2px 3px 0 0; border: 1px solid #222; border-radius: 3px; overflow: hidden; background: #4e4e4e; line-height: 12px; }
.ls i { width: 25px; background: #f00; margin-right: 4px; }
.layers .arrows { height: 17px; margin: 1px 4px 0 0; }
.ly { flex: none; height: 18px; line-height: 17px; background: #3e3e3e; border: 1px solid #242424; border-top: 0; border-left: 0; border-radius: 0 0 3px 3px; display: flex; padding-left: 6px; letter-spacing: -.4px; }
.ly i { width: 11px; height: 11px; border: 1px solid #999; margin: 2px 8px 0 0; flex: none; }
.ly.on { background: #4b4b4b; color: #fff; font-weight: 600; letter-spacing: -.3px; }
.right { width: 287px; height: 649px; margin: 3px 0 0 3px; background: #404040; display: flex; flex-direction: column; flex: none; }
.filter { height: 45px; flex: none; display: flex; align-items: center; padding: 0 8px; }
.filter span { margin-top: -1px; }
.filter .cmp { margin-left: auto; margin-right: 6px; letter-spacing: -.35px; }
.fb { display: flex; border: 1px solid #222; border-radius: 3px; width: 43px; height: 27px; overflow: hidden; }
.fb div { width: 28px; background: #6384a6; display: flex; align-items: center; justify-content: center; }
.fb em { border-left: 1px solid #222; background: #545454; flex: 1; display: flex; align-items: center; justify-content: center; }
.right > .search { margin: 0 8px; flex: none; }
.ptabs { height: 33px; flex: none; margin: 0 10px 0 8px; padding: 14px 0 0 9px; border-bottom: 1px solid #232323; display: flex; }
.ptabs span { border: 1px solid #232323; border-bottom: 0; border-radius: 3px 3px 0 0; height: 18px; line-height: 17px; width: 96px; padding: 0 6px; display: flex; align-items: center; gap: 5px; background: #373737; letter-spacing: -.25px; }
.ptabs .on { background: #4e4e4e; margin-right: -1px; width: 54px; }
.scroll { height: 506px; display: flex; overflow: hidden; margin-left: 8px; flex: none; }
.content { width: 255px; flex: none; }
h2 { margin: 0; font-size: 11.5px; line-height: 15px; height: 20px; display: flex; align-items: center; gap: 4px; color: #f2f2f2; letter-spacing: -.35px; }
.gm { height: 19px; padding-bottom: 7px; }
.table { border: 1px solid #232323; background: #3a3a3a; border-radius: 2px 2px 0 0; height: 142px; }
.th { height: 20px; background: #484848; border-bottom: 1px solid #232323; display: flex; align-items: center; overflow: hidden; }
.th span { height: 13px; line-height: 13px; border-right: 1px solid #2a2a2a; padding-left: 6px; display: flex; align-items: center; flex: none; letter-spacing: -.05px; }
.th span svg { margin-left: 8px; }
.th span:nth-child(2) { padding: 0; }
.th .nc { border: 0; letter-spacing: -.1px; }
.td { height: 20px; display: flex; border-bottom: 1px solid #333; }
.td span { border-right: 1px solid #333; display: flex; align-items: center; justify-content: center; flex: none; }
.td span:first-child { justify-content: flex-start; padding-left: 10px; }
.td .c1 { padding-right: 4px; }
.td .last { width: 53px; border: 0; padding-left: 14px; }
.sw { width: 16px; height: 16px; background: #1e2028; border: 1px solid #292929; }
.cb { width: 15px; height: 15px; background: #555; border: 1px solid #222; border-radius: 2px; display: flex; align-items: center; justify-content: center; }
.foot { height: 32px; background: #484848; border: 1px solid #232323; border-top: 0; display: flex; gap: 4px; justify-content: flex-end; padding: 4px 4px 4px; border-radius: 0 0 2px 2px; letter-spacing: -.05px; }
.foot button { width: 75px; height: 23px; background: #545454; border: 1px solid #222; border-radius: 3px; gap: 6px; }
.foot button:first-child { padding-left: 3px; }
.foot .dis { background: #474747; border-color: #3d3d3d; color: #6d6d6d; }
.foot .tr { width: 31px; }
.gd { height: 31px; padding-top: 12px; padding-bottom: 6px; margin-top: 2px; }
.ot { height: 34px; padding-top: 6px; }
.units { background: #484848; border-radius: 4px 4px 0 0; height: 90px; padding: 5px 6px 0; }
.uh { display: flex; justify-content: space-between; height: 17px; color: #fff; }
.uh span { color: #aaa; margin-right: 1px; }
.seg { display: flex; height: 23px; border: 1px solid #222; border-radius: 3px; overflow: hidden; background: #545454; text-align: center; line-height: 20px; }
.seg span { flex: 1; }
.seg .on { background: #6384a6; border-right: 1px solid #222; flex: 0 0 122px; }
.units hr { height: 1px; background: #2a2a2a; margin: 8px 0 9px; }
.poly { display: flex; padding-left: 13px; letter-spacing: -.25px; }
.poly div { margin: 3px 0 0 auto; width: 133px; height: 20px; border: 1px solid #222; border-radius: 3px; background: #545454; }
.bar { display: flex; flex-direction: column; padding: 7px 0 6px 4px; }
.bar i { width: 6px; height: 126px; background: #7b7b7b; border-radius: 3px; margin: 305px 0 auto; }
.nothing { padding-left: 3px; line-height: 17px; margin-top: 6px; letter-spacing: -.15px; }
footer { height: 23px; background: #404040; border-bottom: 1px solid #333; display: flex; padding-left: 4px; flex: none; line-height: 26px; letter-spacing: -.22px; }
footer span { flex: none; }
footer .xy { letter-spacing: -.62px; }
footer .gr { letter-spacing: -.5px; }
footer i { width: 2px; height: 18px; background: #303030; margin-top: 5px; }
footer .con { padding-left: 4px; width: 346px; }
footer button { margin: 5px 5px 0 auto; height: 18px; width: 45px; border: 1px solid #222; border-radius: 3px; background: #555; }
```
